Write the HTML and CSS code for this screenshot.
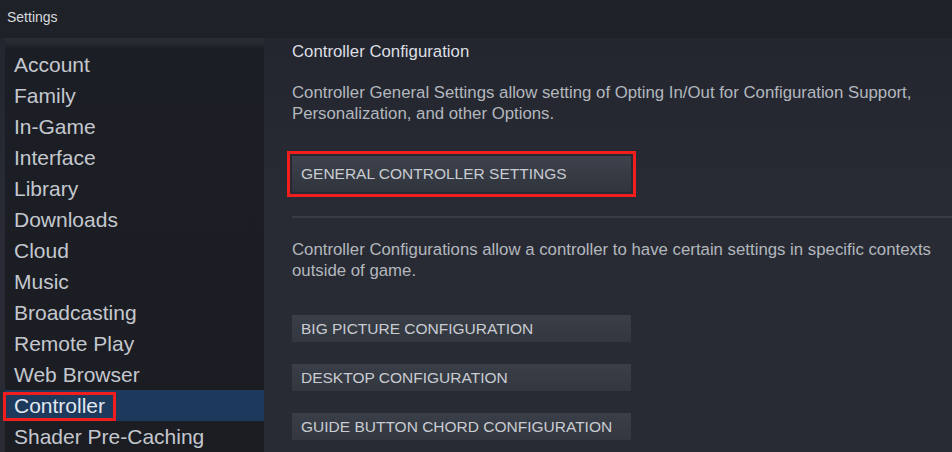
FILE: index.html
```html
<!DOCTYPE html>
<html>
<head>
<meta charset="utf-8">
<link rel="stylesheet" href="styles.css">
</head>
<body>
<div class="window">
  <div class="titlebar">Settings</div>
  <div class="content">
    <nav class="sidebar">
      <div class="item">Account</div>
      <div class="item">Family</div>
      <div class="item">In-Game</div>
      <div class="item">Interface</div>
      <div class="item">Library</div>
      <div class="item">Downloads</div>
      <div class="item">Cloud</div>
      <div class="item">Music</div>
      <div class="item">Broadcasting</div>
      <div class="item">Remote Play</div>
      <div class="item">Web Browser</div>
      <div class="item selected"><span class="highlight">Controller</span></div>
      <div class="item">Shader Pre-Caching</div>
    </nav>
    <main class="main">
      <div class="heading">Controller Configuration</div>
      <p class="desc first">Controller General Settings allow setting of Opting In/Out for Configuration Support, Personalization, and other Options.</p>
      <div class="btn-wrap"><div class="btn tall">GENERAL CONTROLLER SETTINGS</div></div>
      <div class="separator"></div>
      <p class="desc second">Controller Configurations allow a controller to have certain settings in specific contexts outside of game.</p>
      <div class="btn-list">
        <div class="btn">BIG PICTURE CONFIGURATION</div>
        <div class="btn">DESKTOP CONFIGURATION</div>
        <div class="btn">GUIDE BUTTON CHORD CONFIGURATION</div>
      </div>
    </main>
  </div>
</div>
</body>
</html>
```

FILE: styles.css
```css
html, body {
  margin: 0;
  padding: 0;
  width: 952px;
  height: 452px;
  overflow: hidden;
  background: #262a32;
  font-family: "Liberation Sans", Arial, sans-serif;
}

.window {
  display: flex;
  flex-direction: column;
  width: 952px;
  height: 452px;
}

.titlebar {
  height: 38px;
  flex: none;
  box-sizing: border-box;
  padding: 8px 0 0 7px;
  font-size: 14px;
  line-height: 18px;
  color: #d6d9de;
  background: #1f2128;
}

.content {
  flex: 1;
  display: flex;
  background: linear-gradient(180deg, #23262e 0%, #282b33 40%, #282b33 100%);
}

.sidebar {
  width: 259px;
  margin-left: 5px;
  flex: none;
  box-sizing: border-box;
  padding-top: 11px;
  background: linear-gradient(180deg, #2a2d35 0px, #25282f 6px, #1c1e25 11px, #1b1d23 100%);
}

.item {
  height: 31px;
  line-height: 31px;
  padding-left: 9px;
  font-size: 21px;
  color: #c4c8ce;
  white-space: nowrap;
}

.item.selected {
  background: #1d3a5d;
  color: #e2e8ef;
}

.highlight {
  position: relative;
}

.highlight::after {
  content: "";
  position: absolute;
  left: -11px;
  right: -11px;
  top: -2px;
  bottom: -4px;
  border: 3px solid #f21d1d;
  box-sizing: border-box;
}

.main {
  flex: 1;
  display: flex;
  flex-direction: column;
  padding: 3px 0 0 28px;
}

.heading {
  font-size: 16.8px;
  line-height: 21px;
  color: #dcdfe4;
}

.desc {
  margin: 0;
  font-size: 16.8px;
  line-height: 21px;
  color: #b3b7be;
  padding-right: 8px;
}

.desc.first {
  margin-top: 20px;
}

.btn-wrap {
  margin-top: 27px;
  margin-left: -5px;
  align-self: flex-start;
  padding: 2px;
  border: 3px solid #f21d1d;
}

.btn {
  width: 339px;
  height: 27px;
  box-sizing: border-box;
  padding-left: 9px;
  font-size: 15.5px;
  line-height: 27px;
  color: #c9ccd2;
  background: linear-gradient(180deg, #3a3e48 0%, #33373f 100%);
  white-space: nowrap;
}

.btn.tall {
  height: 36px;
  line-height: 36px;
  width: 339px;
  background: linear-gradient(180deg, #3e424c 0%, #30343c 100%);
}

.separator {
  margin-top: 19px;
  height: 2px;
  background: #383c45;
}

.desc.second {
  margin-top: 21px;
}

.btn-list {
  margin-top: 34px;
  display: flex;
  flex-direction: column;
  gap: 22px;
}
```
